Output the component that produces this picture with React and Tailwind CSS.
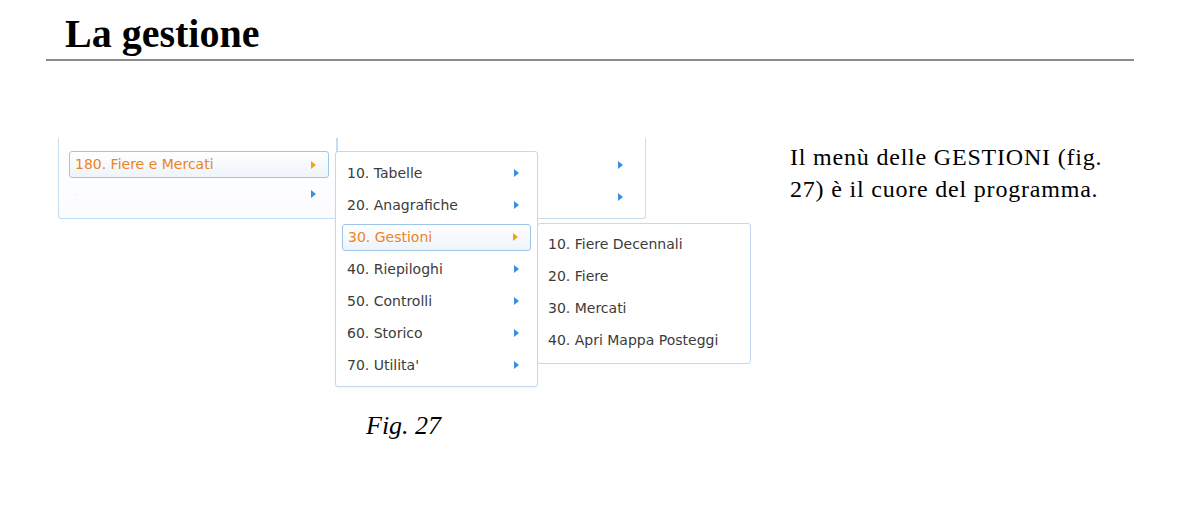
import React from "react";

const Arrow = ({ orange }) => (
  <span
    className={
      orange
        ? "w-0 h-0 border-y-[4px] border-y-transparent border-l-[5px] border-l-[#f2a516]"
        : "w-0 h-0 border-y-[4px] border-y-transparent border-l-[5px] border-l-[#3b8fdc]"
    }
  />
);

const Row = ({ label, arrow, active, pl = "pl-[11px]", pr = "pr-[18px]" }) => (
  <div className="h-[32px] flex items-center">
    <div
      className={
        active
          ? `flex-1 h-[27px] flex items-center justify-between mx-[6px] ${pr} pl-[5px] rounded-[3px] border border-[#9ec5e8] bg-gradient-to-b from-white to-[#eef4fb] text-[#ea8423]`
          : `flex-1 flex items-center justify-between ${pl} ${pr} text-[#3b3b3b]`
      }
    >
      <span>{label}</span>
      {arrow && <Arrow orange={active} />}
    </div>
  </div>
);

export default function App() {
  const menuFont = { fontFamily: '"DejaVu Sans", Verdana, sans-serif' };
  return (
    <div className="w-[1200px] h-[531px] bg-white overflow-hidden" style={{ fontFamily: '"Liberation Serif", "Times New Roman", serif' }}>
      <h1 className="pl-[65px] pt-[12px] text-[40px] leading-[44px] font-bold text-black">La gestione</h1>
      <div className="ml-[46px] mt-[3px] w-[1088px] h-[2px] bg-[#8c8c8c]" />
      <div className="flex mt-[77px]">
        <div className="ml-[58px] flex flex-col">
          <div className="relative w-[693px] h-[250px] text-[14px]" style={menuFont}>
            {/* panel 1 */}
            <div className="absolute left-0 top-0 w-[279px] h-[81px] border-x border-b border-[#c6dcf0] rounded-b-[3px] bg-gradient-to-b from-white to-[#fbfcfe]">
              <div className="pt-[13px]">
                <div className="h-[27px] ml-[10px] mr-[7px] flex items-center justify-between pl-[5px] pr-[12px] rounded-[3px] border border-[#9ec5e8] bg-gradient-to-b from-white to-[#eef4fb] text-[#ea8423]">
                  <span>180. Fiere e Mercati</span>
                  <Arrow orange />
                </div>
                <div className="h-[32px] flex items-center justify-between pl-[16px] pr-[20px]">
                  <span className="text-[#f3e6d6] text-[10px] tracking-[6px]">·</span>
                  <Arrow />
                </div>
              </div>
            </div>
            {/* panel 2 */}
            <div className="absolute left-[279px] top-0 w-[309px] h-[81px] border-x border-b border-[#c6dcf0] rounded-b-[3px] bg-white">
              <div className="pt-[11px] flex flex-col">
                <div className="h-[32px] flex items-center justify-end pr-[22px]"><Arrow /></div>
                <div className="h-[32px] flex items-center justify-end pr-[22px]"><Arrow /></div>
              </div>
            </div>
            {/* panel 3 */}
            <div className="absolute left-[277px] top-[13px] w-[203px] h-[236px] border border-[#c2d9ef] rounded-[3px] bg-white shadow-[0_1px_2px_rgba(0,0,0,0.05)]">
              <div className="pt-[5px] flex flex-col">
                <Row label="10. Tabelle" arrow />
                <Row label="20. Anagrafiche" arrow />
                <Row label="30. Gestioni" arrow active pr="pr-[12px]" />
                <Row label="40. Riepiloghi" arrow />
                <Row label="50. Controlli" arrow />
                <Row label="60. Storico" arrow />
                <Row label="70. Utilita'" arrow />
              </div>
            </div>
            {/* panel 4 */}
            <div className="absolute left-[479px] top-[85px] w-[214px] h-[141px] border border-[#c2d9ef] rounded-[3px] bg-white">
              <div className="pt-[4px] flex flex-col">
                <Row label="10. Fiere Decennali" pl="pl-[10px]" />
                <Row label="20. Fiere" pl="pl-[10px]" />
                <Row label="30. Mercati" pl="pl-[10px]" />
                <Row label="40. Apri Mappa Posteggi" pl="pl-[10px]" />
              </div>
            </div>
          </div>
          <div className="mt-[24px] pl-[308px] text-[26px] leading-[28px] italic text-black">Fig. 27</div>
        </div>
        <div className="ml-[39px] mt-[3px] w-[380px] text-[24px] leading-[32px] tracking-[0.8px] text-black">
          Il menù delle GESTIONI (fig.
          <br />
          27) è il cuore del programma.
        </div>
      </div>
    </div>
  );
}
